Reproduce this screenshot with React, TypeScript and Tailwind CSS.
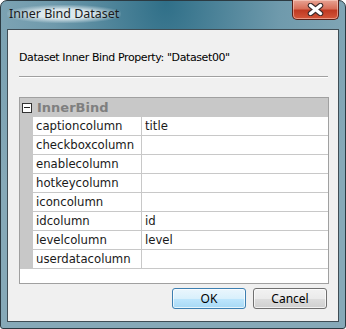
import React from "react";

const rows: [string, string][] = [
  ["captioncolumn", "title"],
  ["checkboxcolumn", ""],
  ["enablecolumn", ""],
  ["hotkeycolumn", ""],
  ["iconcolumn", ""],
  ["idcolumn", "id"],
  ["levelcolumn", "level"],
  ["userdatacolumn", ""],
];

function CloseButton() {
  return (
    <div className="mr-[6px] -mt-px flex h-[20px] w-[47px] items-center justify-center rounded-b-[5px] border border-t-0 border-[#5a2018] bg-[linear-gradient(to_bottom,#e8a393_0%,#d8705a_45%,#c03a22_55%,#d4573a_100%)] shadow-[inset_0_0_0_1px_rgba(255,220,210,0.5)]">
      <svg width="17" height="13" viewBox="0 0 17 13">
        <path
          d="M3.5 2.5 L13.5 10.5 M13.5 2.5 L3.5 10.5"
          stroke="#3a2a2a"
          strokeWidth="5.5"
          strokeLinecap="round"
        />
        <path
          d="M3.5 2.5 L13.5 10.5 M13.5 2.5 L3.5 10.5"
          stroke="#ffffff"
          strokeWidth="3.5"
          strokeLinecap="round"
        />
      </svg>
    </div>
  );
}

export default function App() {
  return (
    <div className="h-[329px] w-[346px] bg-white">
      {/* window frame */}
      <div className="flex h-full w-full flex-col rounded-t-[7px] rounded-b-[3px] border border-[#2b3a42] bg-[radial-gradient(ellipse_60%_90%_at_48%_0%,#2f6f88_0%,#6f9aac_55%,#86a9b8_100%)] font-['Noto_Sans',sans-serif]">
        {/* title bar */}
        <div className="relative flex h-[28px] shrink-0 items-start justify-between">
          <div className="ml-[6px] mt-[4px] rounded-[10px] bg-[radial-gradient(ellipse_at_center,rgba(225,236,240,0.95)_35%,rgba(225,236,240,0)_75%)] px-[2px] text-[12.5px] leading-[18px] text-[#1b1b1b]">
            Inner Bind Dataset
          </div>
          <CloseButton />
        </div>

        {/* client area */}
        <div className="mx-[6px] mb-[6px] flex flex-1 flex-col border border-[#3f4d55] bg-[#f0f0f0] font-['DejaVu_Sans',sans-serif] text-[11.7px] text-black">
          <div className="h-[67px] shrink-0 px-[11px]">
            <div className="pt-[21px] text-[11px] leading-[14px] tracking-[-0.4px]">
              Dataset Inner Bind Property: "Dataset00"
            </div>
            <div className="mt-[11px] h-[2px] w-[309px] border-t border-b border-t-[#a0a0a0] border-b-white" />
          </div>

          {/* property grid */}
          <div className="mx-[11px] flex h-[187px] w-[310px] flex-col border border-[#a0a0a0] bg-white">
            <div className="flex h-[19px] shrink-0 items-center bg-[#c8c8c8]">
              <div className="ml-[2px] flex h-[10px] w-[10px] items-center justify-center border border-[#333] bg-white">
                <div className="h-px w-[6px] bg-[#222]" />
              </div>
              <span className="ml-[5px] text-[13px] font-bold text-[#7f7f7f]">InnerBind</span>
            </div>
            {rows.map(([name, value]) => (
              <div key={name} className="flex h-[19px] shrink-0">
                <div className="w-[13px] shrink-0 bg-[#c8c8c8]" />
                <div className="flex w-[109px] shrink-0 items-center border-r border-b border-[#c8c8c8] pl-[3px] pt-px text-[#1a1a1a]">
                  {name}
                </div>
                <div className="flex flex-1 items-center border-b border-[#c8c8c8] pl-[3px] pt-px text-[#1a1a1a]">
                  {value}
                </div>
              </div>
            ))}
          </div>

          {/* buttons */}
          <div className="mt-[4px] flex justify-end gap-[7px] pr-[11px] font-['Noto_Sans',sans-serif] text-[12px]">
            <button className="flex h-[21px] w-[74px] items-center justify-center rounded-[3px] border border-[#3c7fb1] bg-[linear-gradient(to_bottom,#eaf6fd_0%,#d9f0fc_50%,#bee6fd_51%,#a7d9f5_100%)] shadow-[inset_0_0_0_1px_rgba(255,255,255,0.7)] text-black">
              OK
            </button>
            <button className="flex h-[21px] w-[74px] items-center justify-center rounded-[3px] border border-[#707070] bg-[linear-gradient(to_bottom,#f2f2f2_0%,#ebebeb_50%,#dddddd_51%,#cfcfcf_100%)] shadow-[inset_0_0_0_1px_rgba(255,255,255,0.7)] text-black">
              Cancel
            </button>
          </div>
        </div>
      </div>
    </div>
  );
}
